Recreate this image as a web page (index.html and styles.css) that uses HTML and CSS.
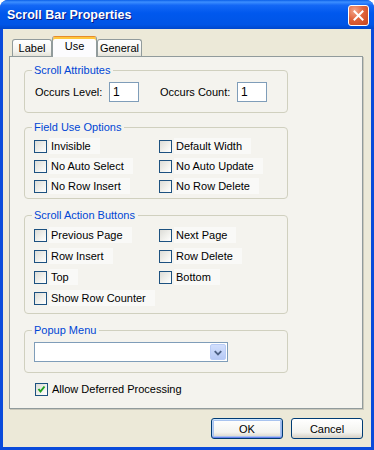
FILE: index.html
```html
<!DOCTYPE html>
<html lang="en">
<head>
    <meta charset="UTF-8">
    <title>Scroll Bar Properties</title>
    <link rel="stylesheet" href="styles.css">
</head>
<body>
    <div class="window">
        <div class="titlebar">
            <span class="title">Scroll Bar Properties</span>
            <span class="close">
                <svg width="11" height="11" viewBox="0 0 11 11"><path d="M1.5 1.5 L9.5 9.5 M9.5 1.5 L1.5 9.5" stroke="#fff" stroke-width="2" stroke-linecap="square"/></svg>
            </span>
        </div>
        <div class="client">
            <div class="tabs">
                <div class="tab tab-label">Label</div>
                <div class="tab tab-use active">Use</div>
                <div class="tab tab-general">General</div>
            </div>
            <div class="panel">
                <div class="group group-attrs">
                    <div class="group-title">Scroll Attributes</div>
                    <div class="attrs">
                        <span class="attr-label">Occurs Level:</span>
                        <span class="num">1</span>
                        <span class="attr-label">Occurs Count:</span>
                        <span class="num">1</span>
                    </div>
                </div>

                <div class="group group-options">
                    <div class="group-title">Field Use Options</div>
                    <div class="checks">
                        <div class="check"><span class="box"></span><span class="text">Invisible</span></div>
                        <div class="check"><span class="box"></span><span class="text">Default Width</span></div>
                        <div class="check"><span class="box"></span><span class="text">No Auto Select</span></div>
                        <div class="check"><span class="box"></span><span class="text">No Auto Update</span></div>
                        <div class="check"><span class="box"></span><span class="text">No Row Insert</span></div>
                        <div class="check"><span class="box"></span><span class="text">No Row Delete</span></div>
                    </div>
                </div>

                <div class="group group-actions">
                    <div class="group-title">Scroll Action Buttons</div>
                    <div class="checks">
                        <div class="check"><span class="box"></span><span class="text">Previous Page</span></div>
                        <div class="check"><span class="box"></span><span class="text">Next Page</span></div>
                        <div class="check"><span class="box"></span><span class="text">Row Insert</span></div>
                        <div class="check"><span class="box"></span><span class="text">Row Delete</span></div>
                        <div class="check"><span class="box"></span><span class="text">Top</span></div>
                        <div class="check"><span class="box"></span><span class="text">Bottom</span></div>
                        <div class="check"><span class="box"></span><span class="text">Show Row Counter</span></div>
                    </div>
                </div>

                <div class="group group-popup">
                    <div class="group-title">Popup Menu</div>
                    <div class="select">
                        <span class="drop">
                            <svg width="15" height="15" viewBox="0 0 15 15"><path d="M4 6 L7.5 9.5 L11 6" fill="none" stroke="#4D6185" stroke-width="2"/></svg>
                        </span>
                    </div>
                </div>

                <div class="check check-allow">
                    <span class="box">
                        <svg width="11" height="11" viewBox="0 0 11 11"><path d="M2.5 5 L4.5 7.5 L8.5 2.5" fill="none" stroke="#21A121" stroke-width="2"/></svg>
                    </span>
                    <span class="plain">Allow Deferred Processing</span>
                </div>
            </div>
            <div class="buttons">
                <button class="btn default">OK</button>
                <button class="btn">Cancel</button>
            </div>
        </div>
    </div>
</body>
</html>
```

FILE: styles.css
```css
html {
    background: #fff;
}
body {
    margin: 0;
    font-family: "Liberation Sans", Tahoma, Arial, sans-serif;
    font-size: 11px;
    color: #000;
}
.window {
    width: 374px;
    height: 450px;
    box-sizing: border-box;
    background: #0A4BDB;
    border-radius: 8px 8px 0 0;
    padding: 0 3px 3px 3px;
    display: flex;
    flex-direction: column;
}
.titlebar {
    height: 29px;
    margin: 0 -3px;
    padding: 0 5px 0 7px;
    display: flex;
    align-items: center;
    justify-content: space-between;
    border-radius: 8px 8px 0 0;
    background: linear-gradient(to bottom, #0A5FE8 0%, #3D8FFF 7%, #1468F5 18%, #0058EE 45%, #0055E6 85%, #0047CC 100%);
}
.title {
    color: #fff;
    font-weight: bold;
    font-size: 12.5px;
    text-shadow: 1px 1px 0 #0A1883;
    padding-top: 1px;
}
.close {
    width: 21px;
    height: 21px;
    box-sizing: border-box;
    border: 1px solid #fff;
    border-radius: 3px;
    background: radial-gradient(circle at 30% 25%, #F4A58A 0%, #E0643C 45%, #C8441C 100%);
    display: flex;
    align-items: center;
    justify-content: center;
    margin-top: 1px;
}
.client {
    flex: 1;
    background: #ECE9D8;
    padding: 7px 8px 8px 6px;
    display: flex;
    flex-direction: column;
}
.tabs {
    display: flex;
    align-items: flex-end;
    margin: 0 0 -1px 3px;
    height: 21px;
}
.tab {
    height: 17px;
    box-sizing: border-box;
    border: 1px solid #919B9C;
    border-bottom: none;
    border-radius: 3px 3px 0 0;
    background: linear-gradient(to bottom, #FFFFFF, #F3F3EF 70%, #E4E2D9);
    text-align: center;
    line-height: 17px;
    margin-bottom: 1px;
}
.tab-label {
    width: 40px;
}
.tab-use {
    width: 45px;
}
.tab-general {
    width: 45px;
}
.tab.active {
    height: 21px;
    margin-bottom: 0;
    background: #FCFCFE;
    border-top: 1px solid #E68B2C;
    box-shadow: inset 0 2px 0 #FFC73C;
    line-height: 18px;
    position: relative;
    z-index: 1;
}
.panel {
    height: 353px;
    box-sizing: border-box;
    border: 1px solid #919B9C;
    box-shadow: 1px 1px 0 #C9C7BA;
    background: #F4F3EE;
    padding: 13px 0 0 14px;
}
.group {
    width: 264px;
    box-sizing: border-box;
    border: 1px solid #D0D0BF;
    border-radius: 4px;
    padding: 0 9px;
}
.group-title {
    display: table;
    margin: -8px 0 0 -2px;
    padding: 0 3px 0 2px;
    background: #F4F3EE;
    color: #0046D5;
    line-height: 14px;
}
.attrs {
    display: grid;
    grid-template-columns: 75px 50px 78px 1fr;
    align-items: center;
    margin-top: 5px;
    height: 20px;
}
.attr-label {
    padding-left: 1px;
}
.num {
    width: 30px;
    height: 20px;
    box-sizing: border-box;
    border: 1px solid #7F9DB9;
    background: #fff;
    font-size: 12px;
    line-height: 18px;
    padding-left: 3px;
}
.group-attrs {
    padding-bottom: 10px;
}
.checks {
    display: grid;
    grid-template-columns: 125px 1fr;
    row-gap: 4px;
    margin-top: 4px;
}
.group-options {
    margin-top: 14px;
    padding-bottom: 4px;
}
.group-actions {
    margin-top: 16px;
    padding-bottom: 7px;
}
.group-actions .checks {
    row-gap: 5px;
    margin-top: 5px;
}
.check {
    display: flex;
    align-items: center;
    height: 16px;
}
.box {
    width: 13px;
    height: 13px;
    box-sizing: border-box;
    border: 1px solid #1C5180;
    background: linear-gradient(135deg, #DCDCD7 0%, #F2F2EE 60%, #FFFFFF 100%);
    margin-right: 2px;
    flex: none;
    display: flex;
    align-items: center;
    justify-content: center;
}
.check .text {
    padding: 0 9px 0 2px;
    background: #F9F9F7;
    line-height: 16px;
}
.group-popup {
    margin-top: 16px;
    padding-bottom: 10px;
}
.select {
    width: 194px;
    height: 20px;
    box-sizing: border-box;
    border: 1px solid #7F9DB9;
    background: #fff;
    margin-top: 5px;
    padding: 1px;
    display: flex;
    justify-content: flex-end;
}
.drop {
    width: 16px;
    height: 16px;
    box-sizing: border-box;
    border: 1px solid #B9CCF6;
    border-radius: 2px;
    background: linear-gradient(to bottom, #D2DFFC, #B6C9F5);
    display: flex;
    align-items: center;
    justify-content: center;
}
.check-allow {
    margin: 8px 0 0 11px;
}
.check-allow .plain {
    padding-left: 2px;
}
.buttons {
    display: flex;
    justify-content: flex-end;
    gap: 8px;
    margin-top: 9px;
}
.btn {
    width: 72px;
    height: 21px;
    box-sizing: border-box;
    border: 1px solid #003C74;
    border-radius: 3px;
    background: linear-gradient(to bottom, #FFFFFF, #F3F3EF 70%, #D6D0C5);
    font-family: "Liberation Sans", Tahoma, Arial, sans-serif;
    font-size: 11px;
    color: #000;
    padding: 0;
}
.btn.default {
    box-shadow: inset 0 1px 0 #CEE7FF, inset 0 -1px 0 #6982EE, inset 1px 0 0 #B7D0F6, inset -1px 0 0 #98B5EC, inset 0 0 0 2px #A8C3EF;
}
```
